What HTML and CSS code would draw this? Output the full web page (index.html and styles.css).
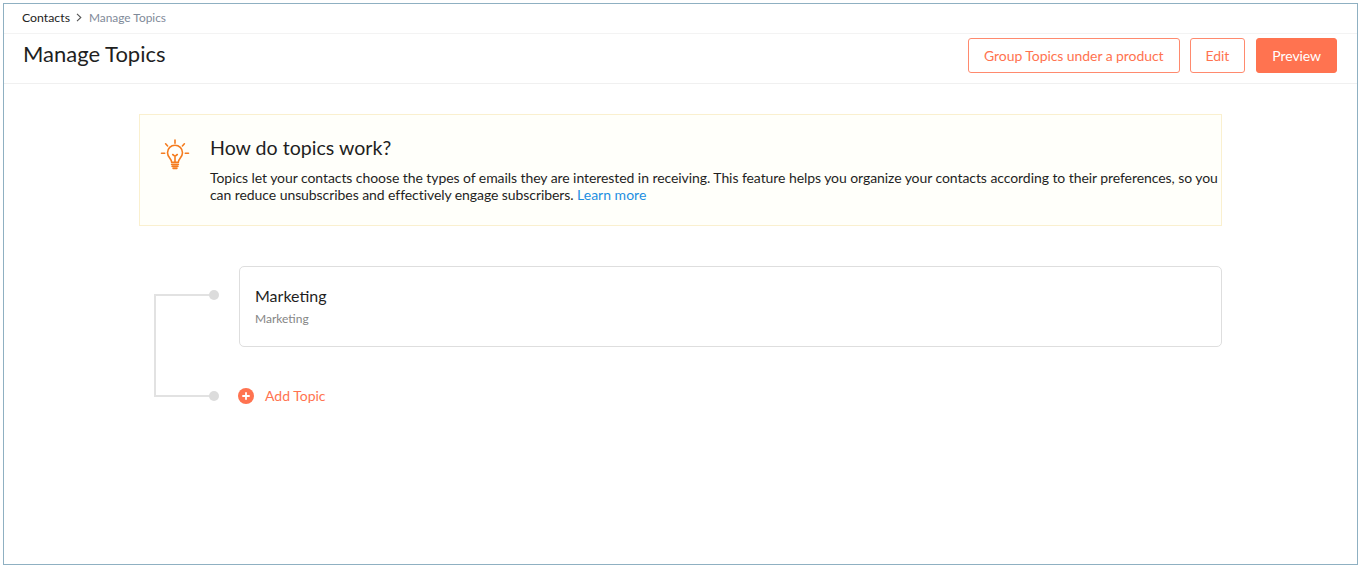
FILE: index.html
```html
<!DOCTYPE html>
<html>
<head>
  <title>Manage Topics</title>
  <link rel="stylesheet" href="styles.css">
</head>
<body>

<div class="frame">
  <div class="breadcrumb">
    <a href="#" class="crumb">Contacts</a>
    <svg class="crumb-sep" width="6" height="9" viewBox="0 0 6 9"><path d="M1 .8l3.8 3.7L1 8.2" fill="none" stroke="#555" stroke-width="1.1"/></svg>
    <span class="crumb-current">Manage Topics</span>
  </div>

  <div class="header">
    <h1>Manage Topics</h1>
    <div class="actions">
      <button type="button" class="btn">Group Topics under a product</button>
      <button type="button" class="btn">Edit</button>
      <button type="button" class="btn btn-primary">Preview</button>
    </div>
  </div>

  <div class="content">
    <div class="tip">
      <svg class="tip-icon" width="30" height="32" viewBox="0 0 30 32" fill="none" stroke="#f57c1f" stroke-width="1.6" stroke-linecap="round">
        <path d="M15 1v3.200M5.600 4.800l2 2.200M24.400 4.800l-2 2.200M1.500 14.200h3.200M25.300 14.200h3.200"/>
        <path d="M11.700 23.200c0-3.400-4.200-4.800-4.200-9.500a7.500 7.500 0 0 1 15 0c0 4.700-4.200 6.100-4.200 9.500z"/>
        <path d="M12.700 15.500l2.300 1.800 2.300-1.800M15 17.300v5.900"/>
        <path d="M11.700 25.300h6.600M12.200 27.300h5.600M13.200 29.300h3.600" stroke-width="1.800"/>
      </svg>
      <div class="tip-body">
        <h2>How do topics work?</h2>
        <p>Topics let your contacts choose the types of emails they are interested in receiving. This feature helps you organize your contacts according to their preferences, so you can reduce unsubscribes and effectively engage subscribers. <a href="#">Learn more</a></p>
      </div>
    </div>

    <div class="topics">
      <div class="tree">
        <span class="tree-dot tree-dot-top"></span>
        <span class="tree-dot tree-dot-bottom"></span>
      </div>
      <div class="topic-list">
        <div class="topic-card">
          <h3>Marketing</h3>
          <p>Marketing</p>
        </div>
        <a href="#" class="add-topic">
          <svg width="16" height="16" viewBox="0 0 16 16"><circle cx="8" cy="8" r="8" fill="#ff7350"/><path d="M8 4.300v7.400M4.300 8h7.400" stroke="#fff" stroke-width="1.800"/></svg>
          Add Topic
        </a>
      </div>
    </div>
  </div>
</div>

</body>
</html>
```

FILE: styles.css
```css
* {
  box-sizing: border-box;
}

html,
body {
  height: 100%;
}

body {
  margin: 0;
  padding: 3px;
  background-color: #fff;
  font-family: "Lato", sans-serif;
  color: #1f1f1f;
  overflow: hidden;
}

.frame {
  height: 100%;
  border: 1px solid #8fb0c2;
}

.breadcrumb {
  height: 30px;
  padding: 0 0 2px 18px;
  display: flex;
  align-items: center;
  gap: 6px;
  font-size: 12.300px;
  border-bottom: 1px solid #f3f3f3;
}

.crumb {
  color: #222;
  text-decoration: none;
}

.crumb-sep {
  margin-right: 1px;
}

.crumb-current {
  color: #7f8a99;
  font-size: 11.900px;
}

.header {
  height: 50px;
  padding: 0 20px 8px 19px;
  display: flex;
  align-items: center;
  justify-content: space-between;
  border-bottom: 1px solid #f0f0f0;
}

.header h1 {
  margin: 0 0 2px 0;
  font-size: 22px;
  font-weight: 400;
}

.actions {
  display: flex;
  gap: 10px;
  margin-top: 1px;
}

.btn {
  height: 35px;
  padding: 0 15px;
  font-family: inherit;
  font-size: 14px;
  letter-spacing: -0.07px;
  color: #ff7350;
  background-color: #fff;
  border: 1px solid #ff8a6e;
  border-radius: 3px;
}

.btn-primary {
  margin-left: 1px;
  color: #fff;
  background-color: #ff7350;
  border-color: #ff7350;
}

.content {
  width: 1083px;
  margin: 30px 0 0 135px;
}

.tip {
  height: 112px;
  padding: 24px 0 0 20px;
  display: flex;
  background-color: #fffffa;
  border: 1px solid #faf0cf;
}

.tip-icon {
  flex-shrink: 0;
  margin-right: 20px;
}

.tip-body h2 {
  margin: -3px 0 10px 0;
  font-size: 19.600px;
  font-weight: 400;
}

.tip-body p {
  margin: 0;
  font-size: 14px;
  letter-spacing: -0.07px;
  line-height: 17px;
}

.tip-body a {
  color: #1d8fe1;
  letter-spacing: 0;
  text-decoration: none;
}

.topics {
  display: flex;
  margin-top: 40px;
}

.tree {
  position: relative;
  width: 100px;
}

.tree::before {
  content: "";
  position: absolute;
  left: 15px;
  top: 28px;
  width: 60px;
  height: 99px;
  border: 2px solid #e2e2e2;
  border-right: none;
}

.tree-dot {
  position: absolute;
  left: 70px;
  width: 10px;
  height: 10px;
  border-radius: 50%;
  background-color: #dcdcdc;
}

.tree-dot-top {
  top: 24px;
}

.tree-dot-bottom {
  top: 125px;
}

.topic-list {
  flex: 1;
}

.topic-card {
  height: 81px;
  padding: 19px 15px 0 15px;
  border: 1px solid #dedede;
  border-radius: 5px;
}

.topic-card h3 {
  margin: 0 0 6px 0;
  font-size: 16px;
  font-weight: 400;
}

.topic-card p {
  margin: 0;
  font-size: 12px;
  color: #858585;
}

.add-topic {
  margin: 40px 0 0 -1px;
  display: flex;
  align-items: center;
  gap: 11px;
  font-size: 14px;
  color: #ff7350;
  text-decoration: none;
}
```
